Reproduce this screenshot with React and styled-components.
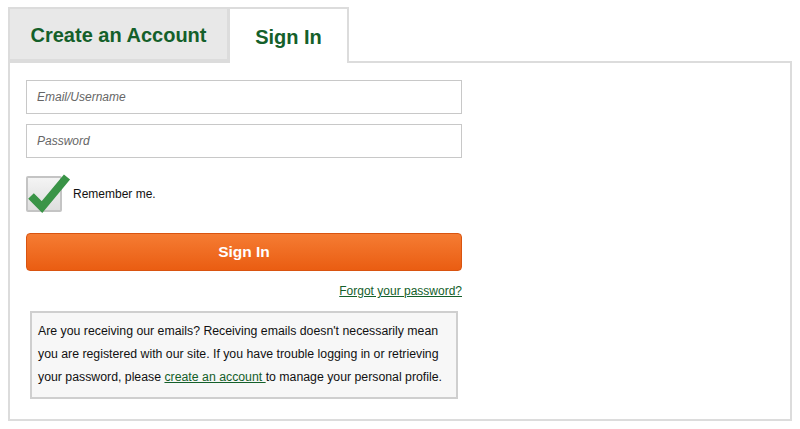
import React, { useState } from 'react';
import styled, { createGlobalStyle } from 'styled-components';

const Global = createGlobalStyle`
  body {
    margin: 0;
    padding: 7px 8px;
    background: #fff;
    font-family: "Liberation Sans", Arial, sans-serif;
  }
`

const Wrap = styled.div`
  width: 784px;
`

const Tabs = styled.div`
  display: flex;
  align-items: flex-end;
  height: 54px;
`

const Tab = styled.div`
  box-sizing: border-box;
  width: ${p => p.$w}px;
  height: ${p => (p.$active ? '56px' : '54px')};
  margin-bottom: ${p => (p.$active ? '-2px' : '0')};
  margin-left: ${p => (p.$active ? '-1px' : '0')};
  position: relative;
  z-index: ${p => (p.$active ? 2 : 1)};
  background: ${p => (p.$active ? '#fff' : '#e8e8e8')};
  border: 2px solid #dcdcdc;
  border-bottom: ${p => (p.$active ? 'none' : '2px solid #dcdcdc')};
  display: flex;
  align-items: center;
  justify-content: center;
  padding-top: 3px;
  font-size: 20px;
  font-weight: bold;
  color: #14602a;
  cursor: pointer;
`

const Panel = styled.div`
  box-sizing: border-box;
  border: 2px solid #dcdcdc;
  padding: 17px 16px 20px;
  height: 360px;
`

const Form = styled.form`
  width: 436px;
  display: flex;
  flex-direction: column;
`

const Input = styled.input`
  box-sizing: border-box;
  height: 34px;
  width: 100%;
  border: 1px solid #c8c8c8;
  padding: 0 10px;
  font-family: inherit;
  font-size: 12px;
  margin-bottom: 10px;
  outline: none;
  &::placeholder {
    color: #666;
    font-style: italic;
  }
`

const CheckRow = styled.label`
  display: flex;
  align-items: center;
  gap: 11px;
  margin-top: 8px;
  font-size: 12px;
  color: #111;
`

const CheckBox = styled.span`
  position: relative;
  box-sizing: border-box;
  width: 36px;
  height: 36px;
  border: 2px solid #c4c4c4;
  border-radius: 2px;
  background: linear-gradient(#f4f4f4, #dedede);
`

const Tick = styled.svg`
  position: absolute;
  left: 0;
  top: -5px;
`

const Button = styled.button`
  margin-top: 21px;
  height: 38px;
  width: 100%;
  border: 1px solid #d95410;
  border-radius: 4px;
  background: linear-gradient(#f57c33, #ea5d12);
  color: #fff;
  font-family: inherit;
  font-size: 15.5px;
  font-weight: bold;
`

const Forgot = styled.a`
  align-self: flex-end;
  margin-top: 13px;
  font-size: 12px;
  color: #14602a;
  text-decoration: underline;
`

const Info = styled.div`
  box-sizing: border-box;
  margin: 13px 4px 0;
  height: 88px;
  background: #f7f7f7;
  border: 2px solid #cfcfcf;
  padding: 7px 6px;
  font-size: 12.3px;
  line-height: 23px;
  color: #111;
  a {
    color: #14602a;
    text-decoration: underline;
  }
`

export default function App() {
  const [remember, setRemember] = useState(true)
  return (
    <Wrap>
      <Global />
      <Tabs>
        <Tab $w={221}>Create an Account</Tab>
        <Tab $w={121} $active>Sign In</Tab>
      </Tabs>
      <Panel>
        <Form onSubmit={e => e.preventDefault()}>
          <Input type="text" placeholder="Email/Username" />
          <Input type="password" placeholder="Password" />
          <CheckRow onClick={() => setRemember(!remember)}>
            <CheckBox>
              {remember && (
                <Tick width="44" height="40" viewBox="0 0 44 40">
                  <path d="M3 23 L14 34 L39 4" fill="none" stroke="#3a9447" strokeWidth="8" strokeLinecap="butt" strokeLinejoin="miter" />
                </Tick>
              )}
            </CheckBox>
            Remember me.
          </CheckRow>
          <Button type="submit">Sign In</Button>
          <Forgot href="#">Forgot your password?</Forgot>
          <Info>
            Are you receiving our emails? Receiving emails doesn't necessarily mean you are registered with our site. If you have trouble logging in or retrieving your password, please <a href="#">create an account </a>to manage your personal profile.
          </Info>
        </Form>
      </Panel>
    </Wrap>
  )
}
